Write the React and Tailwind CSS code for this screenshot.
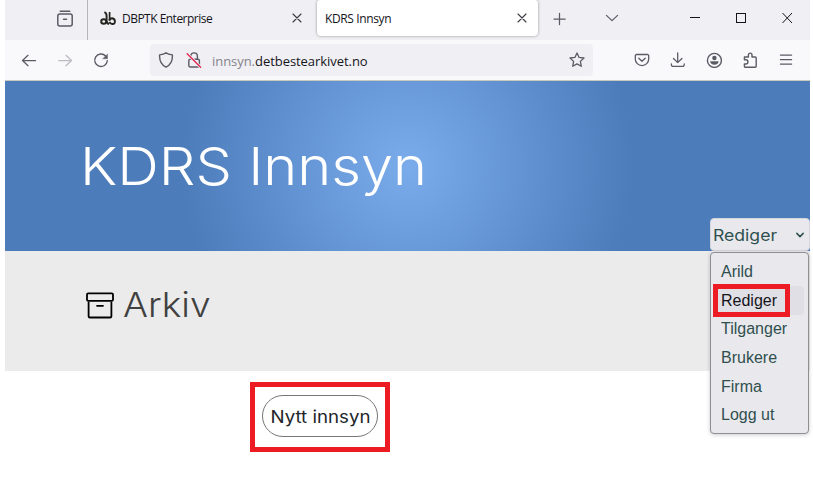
import React from "react";

const line = { fill: "none", stroke: "currentColor", strokeLinecap: "round", strokeLinejoin: "round" };

function Icon({ children, className = "", width = 16, sw = 1.25 }) {
  return (
    <svg width={width} height={width} viewBox="0 0 16 16" strokeWidth={sw} {...line} className={"shrink-0 " + className}>
      {children}
    </svg>
  );
}

const CloseIcon = ({ className = "" }) => (
  <Icon className={className} sw={1.1}>
    <path d="M4 4l8 8M12 4l-8 8" />
  </Icon>
);

function TabBar() {
  return (
    <div className="flex h-10 bg-[#f0eff4] text-[#5b5b66]">
      <div className="flex w-[83px] shrink-0 items-center border-r border-[#b5b4ba] pl-[52px]">
        <svg width="16" height="18" viewBox="0 0 16 18" strokeWidth="1.5" {...line} className="mb-[5px]">
          <path d="M3.2 2.2h9.6" strokeWidth="1.4" />
          <rect x=".8" y="5" width="14.4" height="12" rx="2" />
          <path d="M6.5 10.2h3" />
        </svg>
      </div>
      <div className="flex w-[229px] shrink-0 items-center pl-3">
        <svg width="16" height="15" viewBox="0 0 16 15" strokeWidth="2" {...line} strokeLinecap="butt" className="mb-[3px] text-[#24241e]">
          <ellipse cx="3.7" cy="10.5" rx="2.5" ry="2.2" />
          <path d="M4.4 1.2Q6.6 2.2 6.6 5v4.6q0 3 2.4 3.6" strokeWidth="1.9" />
          <path d="M9.6 1v8.6" strokeWidth="1.7" />
          <path d="M9.2 9.4q.6-2.2 3-2.2 2.7.4 2.7 3.3t-2.7 2.5q-2-.1-2.8-2.2" strokeWidth="1.9" />
        </svg>
        <span className="ml-[6px] w-[167px] pb-[3px] whitespace-nowrap font-['Open_Sans',sans-serif] text-[12px] tracking-[-0.52px] text-[#15141a]">
          DBPTK Enterprise
        </span>
        <CloseIcon className="mb-1 text-[#3c3b44]" />
      </div>
      <div className="flex h-9 w-[221px] shrink-0 items-center rounded-b-[4px] rounded-t-[3px] bg-white pl-2 shadow-[0_0_3px_rgba(0,0,0,0.4)]">
        <span className="mt-px w-[189px] whitespace-nowrap font-['Open_Sans',sans-serif] text-[12px] tracking-[-0.37px] text-[#15141a]">
          KDRS Innsyn
        </span>
        <CloseIcon className="text-[#3c3b44]" />
      </div>
      <div className="mt-[11px] flex h-4 items-start">
        <Icon className="ml-[14px]">
          <path d="M7.5 2.4v11.2M2 8h11.2" />
        </Icon>
        <Icon className="ml-9">
          <path d="M2.4 4.4L8 9.6l5.6-5.2" />
        </Icon>
        <svg width="103" height="14" viewBox="0 0 103 14" fill="none" stroke="#15141a" strokeWidth="1" shapeRendering="crispEdges" className="ml-[70px]">
          <path d="M0 6.5h10" />
          <rect x="46.5" y="2.5" width="9" height="9" />
          <path d="M92.5 2l9.5 10M102 2l-9.5 10" shapeRendering="auto" />
        </svg>
      </div>
    </div>
  );
}

function Toolbar() {
  return (
    <div className="flex h-[41px] items-center border-b border-[#c9c9bd] bg-[#f9f9fb] text-[#5b5b66]">
      <Icon className="ml-4">
        <path d="M14.6 8.5H1.5M7 3.3L1.5 8.5 7 13.7" />
      </Icon>
      <Icon className="ml-5 text-[#bbbbc0]">
        <path d="M1.8 8.5h12.7M9 3.3l5.5 5.2L9 13.7" />
      </Icon>
      <Icon className="ml-5" sw={1.4}>
        <path d="M12.6 3.9A6.3 6.3 0 1 0 14.3 8.8" />
        <path d="M14.5 2.2v4.6H9.9z" fill="currentColor" strokeWidth=".4" />
      </Icon>
      <div className="ml-[41px] flex h-8 w-[443px] items-center rounded-[4px] bg-[#f0eff4] pl-2">
        <Icon sw={1.4}>
          <path d="M8 .8C6.4 2.2 4 2.7 1.6 2.9c-.3 5.7 1.7 10 6.4 12.3 4.7-2.3 6.7-6.6 6.4-12.3C12 2.7 9.6 2.2 8 .8z" />
        </Icon>
        <Icon className="ml-3" sw={1.4}>
          <rect x="2.8" y="7.2" width="10.6" height="7.8" rx="1.5" />
          <path d="M4.8 7V4.2a3.3 3.3 0 0 1 6.6 0V7" />
          <path d="M1.2 1.8l13.4 13.4" stroke="#f0eff4" strokeWidth="3" />
          <path d="M1.2 1.8l13.4 13.4" stroke="#e22850" />
        </Icon>
        <span className="ml-[10px] w-[357px] whitespace-nowrap pt-[3px] font-['Open_Sans',sans-serif] text-[13px] tracking-[-0.05px] text-[#15141a]">
          <span className="text-[#85848c]">innsyn.</span>detbestearkivet.no
        </span>
        <Icon sw={1.3}>
          <path d="M8 .9l2.1 4.5 4.9.6-3.6 3.4.9 4.9L8 11.9l-4.3 2.4.9-4.9L1 6l4.9-.6z" />
        </Icon>
      </div>
      <div className="ml-[41px] flex gap-5">
        <Icon sw={1.3}>
          <path d="M2.5 2.5h11a1.2 1.2 0 0 1 1.2 1.2v3.2a6.7 6.7 0 0 1-13.4 0V3.7a1.2 1.2 0 0 1 1.2-1.2z" />
          <path d="M4.8 6.2L8 9.3l3.2-3.1" />
        </Icon>
        <Icon sw={1.3}>
          <path d="M7.7 .8v9.8M3.5 6.5l4.2 4.1 4.2-4.1M1.4 11.8v1A1.6 1.6 0 0 0 3 14.4h9.6a1.6 1.6 0 0 0 1.6-1.6v-1" />
        </Icon>
        <Icon sw={1.4}>
          <circle cx="8.4" cy="8.4" r="7" />
          <circle cx="8.4" cy="6" r="2.2" fill="currentColor" stroke="none" />
          <path d="M4.2 9.3h8.4c0 2-1.7 3.5-4.2 3.5s-4.2-1.5-4.2-3.5z" fill="currentColor" stroke="none" />
        </Icon>
        <Icon sw={1.4}>
          <path d="M2.4 7.6V5h4V2.9a1.8 1.8 0 0 1 3.6 0V5h3.2a1 1 0 0 1 1 1v8.2a1 1 0 0 1-1 1H3.4a1 1 0 0 1-1-1V12h1.4a1.9 1.9 0 0 0 0-4.2H2.4" />
        </Icon>
        <Icon>
          <path d="M2.4 3h11.2M2.4 7.5h11.2M2.4 12h11.2" />
        </Icon>
      </div>
    </div>
  );
}

function RoleMenu() {
  const items = ["Arild", "Rediger", "Tilganger", "Brukere", "Firma", "Logg ut"];
  return (
    <div className="absolute right-0 top-[137px] w-[100px]">
      <div className="flex h-[33px] items-center justify-between rounded-[4px] border border-[#d5d5de] bg-[#e9e9ed] pl-[2px] pr-1 text-[#2f4f4f]">
        <span className="origin-left scale-x-[1.1] font-[Inter,sans-serif] text-[16px] font-[370]">Rediger</span>
        <svg width="10" height="8" viewBox="0 0 10 8" strokeWidth="1.5" {...line}>
          <path d="M1.8 2.4L5 5.6l3.2-3.2" />
        </svg>
      </div>
      <div className="mt-px h-[182px] w-[99px] rounded-[4px] border border-[#8f8f93] bg-[#e9e9ed] px-1 pt-[4.9px] font-['Liberation_Sans',sans-serif] text-[16px] text-[#2f4f4f] shadow-[0_1px_4px_rgba(0,0,0,0.2)]">
        {items.map((name) => (
          <div
            key={name}
            className={
              "flex h-[28.6px] items-center rounded-[3px] pl-[6px] " +
              (name === "Rediger" ? "relative bg-[#e0dfe6] text-[#15141a]" : "")
            }
          >
            {name}
            {name === "Rediger" && (
              <div className="absolute -left-[2px] -top-[2px] h-[33px] w-[77px] border-[5px] border-[#ed1c24]" />
            )}
          </div>
        ))}
      </div>
    </div>
  );
}

export default function App() {
  return (
    <div className="h-[489px] w-[813px] overflow-hidden bg-white pl-[5px] pr-[3px]">
      <TabBar />
      <Toolbar />
      <main className="relative">
        <header className="h-[170px] bg-[radial-gradient(circle,#7aabeb_0%,#4c7cba_55%)] pl-[75px] pt-[50px]">
          <h1 className="origin-left scale-x-[1.11] whitespace-nowrap font-[Inter,sans-serif] text-[52px] font-[340] leading-[72px] text-white">
            KDRS Innsyn
          </h1>
        </header>
        <section className="flex h-[120px] items-start bg-[#ebebeb] pl-[81px] pt-[29px]">
          <svg width="28" height="27" viewBox="0 0 28 27" strokeWidth="1.8" {...line} className="mt-[12px] text-black">
            <rect x="1" y="1.3" width="26" height="7.6" rx="1.2" />
            <path d="M2.6 10.3v13.6a1.6 1.6 0 0 0 1.6 1.6h19.6a1.6 1.6 0 0 0 1.6-1.6V10.3M11 13.8h6" />
          </svg>
          <h2 className="ml-[9px] origin-left scale-x-[1.09] font-[Inter,sans-serif] text-[34px] font-[340] leading-[50px] text-[#404040]">
            Arkiv
          </h2>
        </section>
        <div className="ml-[245px] mt-[11px] flex h-[70px] w-[140px] items-center justify-center border-[5px] border-[#ed1c24]">
          <button className="mb-[2px] flex h-[42px] w-[116px] items-center justify-center whitespace-nowrap rounded-full border border-[#777] bg-white pt-[3px] font-[Inter,sans-serif] text-[17px] font-[370] text-[#212529]">
            <span className="scale-x-[1.1]">Nytt innsyn</span>
          </button>
        </div>
        <RoleMenu />
      </main>
    </div>
  );
}
